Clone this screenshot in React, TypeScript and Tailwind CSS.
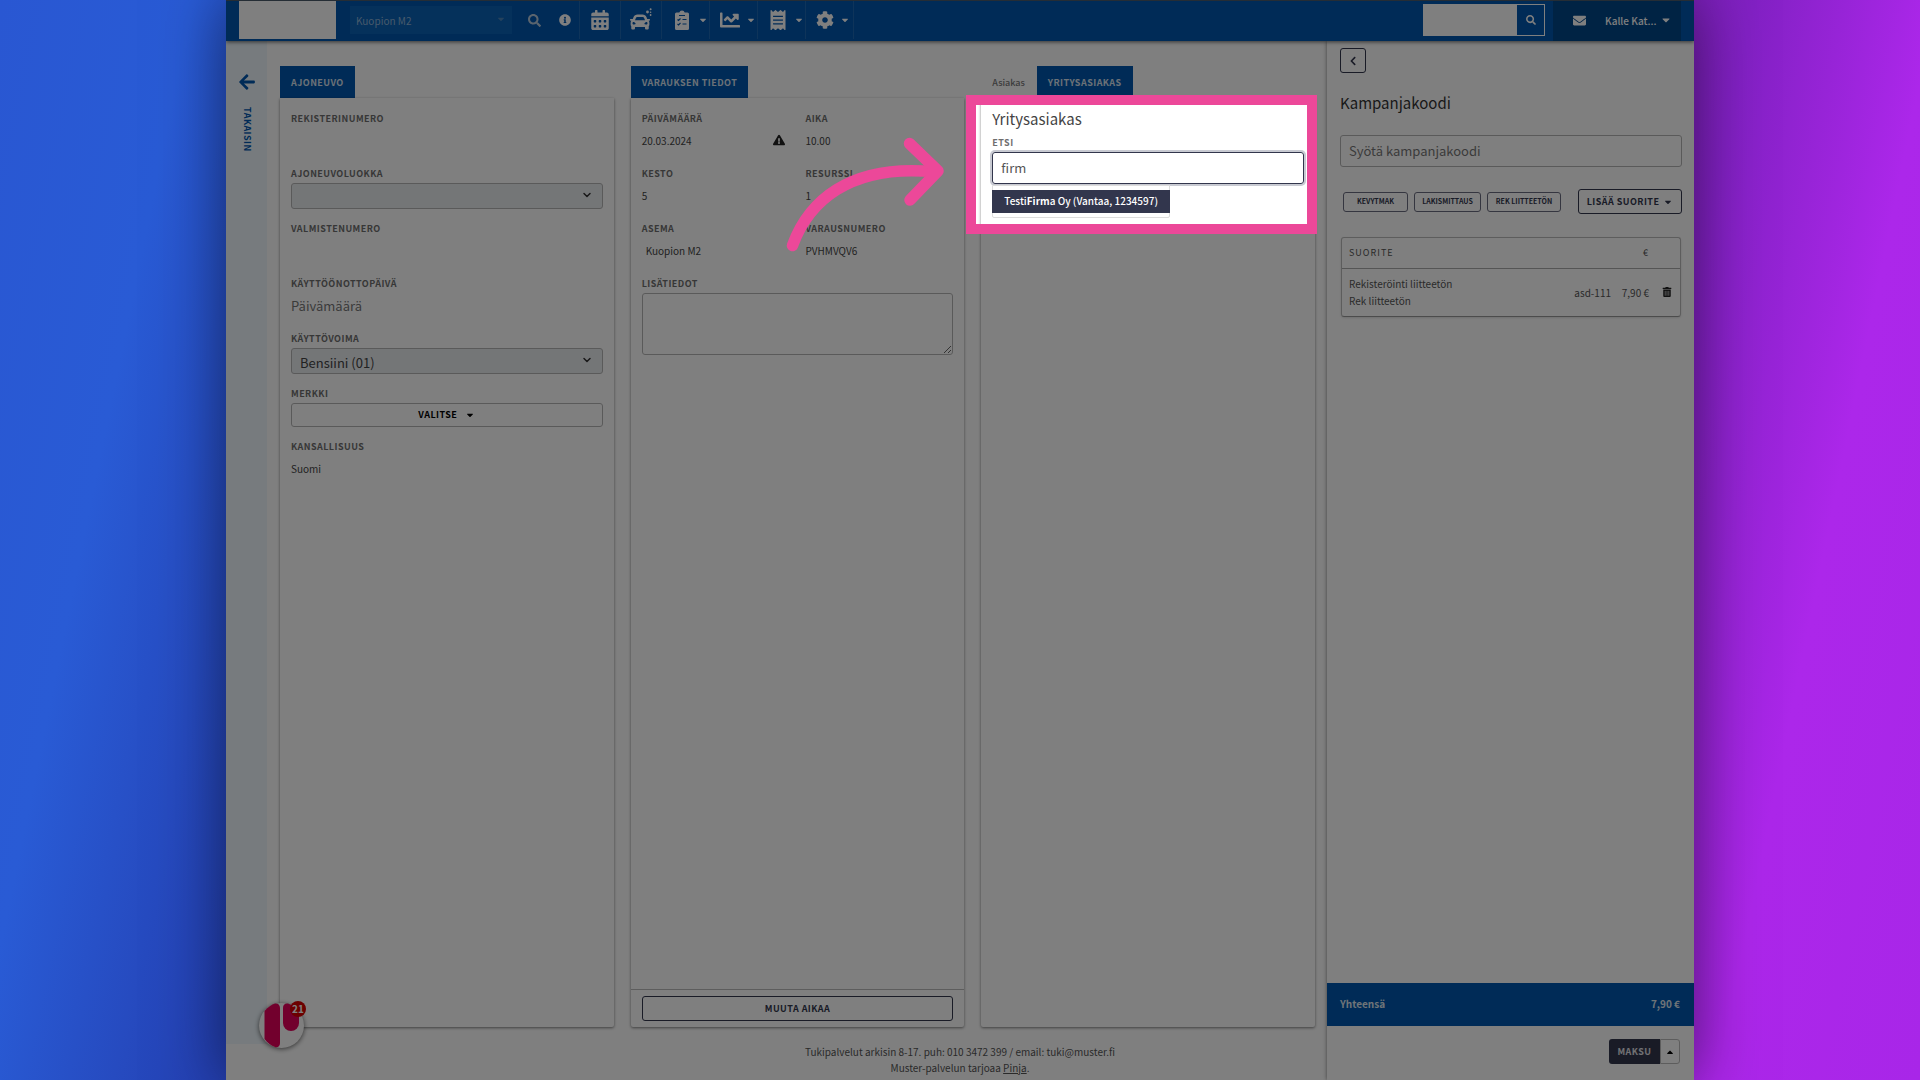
import type { ReactNode } from "react";
import clsx from "clsx";
import {
  FaArrowLeft,
  FaCalendarAlt,
  FaCar,
  FaCaretDown,
  FaCaretUp,
  FaChartLine,
  FaChevronLeft,
  FaCog,
  FaEnvelope,
  FaExclamationTriangle,
  FaInfoCircle,
  FaReceipt,
  FaSearch,
  FaTrashAlt,
} from "react-icons/fa";
import { LuChevronDown } from "react-icons/lu";

const labelStyle =
  "block h-3.5 text-[9px] leading-[14px] font-bold tracking-wider text-[#6e6e6e] uppercase";

const NavButton = ({
  label,
  caret = false,
  children,
}: {
  label: string;
  caret?: boolean;
  children: ReactNode;
}) => (
  <button
    aria-label={label}
    className={clsx(
      "flex h-full items-center border-l border-[#1d69b5] text-white",
      caret ? "w-12 gap-1.5 pl-2.5" : "w-[41px] justify-center",
    )}
  >
    {children}
    {caret && <FaCaretDown className="size-2.5 shrink-0" />}
  </button>
);

const CarWash = () => (
  <span className="flex">
    <FaCar className="mt-1 size-5" />
    <svg viewBox="0 0 6 8" className="-ml-1 h-2 w-1.5" fill="currentColor">
      <circle cx="1.5" cy="4" r="1.4" />
      <circle cx="4.6" cy="1.2" r="1" />
      <circle cx="4.6" cy="4.2" r="0.8" />
      <circle cx="4.6" cy="7" r="0.9" />
    </svg>
  </span>
);

const Checklist = () => (
  <svg viewBox="0 0 20 20" className="size-5 shrink-0">
    <path
      d="M4.500 2.500H7.300a2.800 2.800 0 0 1 5.400 0H15.500A1.500 1.500 0 0 1 17 4V18.500A1.500 1.500 0 0 1 15.500 20H4.500A1.500 1.500 0 0 1 3 18.500V4A1.500 1.500 0 0 1 4.500 2.500Z"
      fill="currentColor"
    />
    <path
      d="M7 5.500H13M5.500 9.500L6.500 10.500L8.500 8.500M10.500 9.500H14.500M5.500 14L6.500 15L8.500 13M10.500 14H14.500"
      fill="none"
      stroke="#0056ae"
      strokeWidth="1.1"
    />
  </svg>
);

const TopBar = () => (
  <header className="relative flex h-[41px] shrink-0 items-center border-t border-[#4a5a6a] bg-[#0056ae] pb-0.5 pl-[13px] shadow-[0_1px_4px_rgba(0,0,0,0.6)]">
    <div className="h-[38px] w-[97px] self-start bg-white" />
    <div className="relative ml-3.5">
      <select
        aria-label="Asema"
        className="block h-7 w-[162px] appearance-none bg-[#0a62b6] px-1.5 text-[10px] text-[#8fb4d8]"
      >
        <option>Kuopion M2</option>
      </select>
      <FaCaretDown className="pointer-events-none absolute top-2 right-1.5 size-2.5 text-[#4a84bb]" />
    </div>
    <button aria-label="Haku" className="ml-4 text-[#b4c9dd]">
      <FaSearch className="size-[13px]" />
    </button>
    <button aria-label="Tietoja" className="ml-[18px] text-white">
      <FaInfoCircle className="size-3" />
    </button>
    <nav className="ml-2 flex h-full border-r border-[#1d69b5]">
      <NavButton label="Kalenteri">
        <FaCalendarAlt className="size-5" />
      </NavButton>
      <NavButton label="Ajoneuvot">
        <CarWash />
      </NavButton>
      <NavButton label="Tehtävät" caret>
        <Checklist />
      </NavButton>
      <NavButton label="Raportit" caret>
        <FaChartLine className="size-5 shrink-0" />
      </NavButton>
      <NavButton label="Kuitit" caret>
        <FaReceipt className="size-5 shrink-0" />
      </NavButton>
      <NavButton label="Asetukset" caret>
        <FaCog className="size-[18px] shrink-0" />
      </NavButton>
    </nav>
    <div className="ml-auto flex h-8 border border-white">
      <input aria-label="Etsi ajoneuvo" className="w-[93px] bg-white px-2 text-xs" />
      <button aria-label="Etsi" className="flex w-[27px] items-center justify-center text-white">
        <FaSearch className="size-2.5" />
      </button>
    </div>
    <div className="-mb-0.5 mr-[13px] ml-2 flex w-32 items-center self-stretch bg-[#004689] pb-0.5 pl-5 text-white">
      <FaEnvelope className="size-[13px]" />
      <button className="ml-[19px] flex items-center gap-1 text-[10px] font-medium">
        Kalle Kat... <FaCaretDown className="size-3" />
      </button>
    </div>
  </header>
);

const BackRail = () => (
  <a
    href="#takaisin"
    className="flex w-[41px] flex-col items-center gap-4 bg-[#eef7fd] pt-8 text-[#0056ae]"
  >
    <FaArrowLeft className="size-[18px]" />
    <span className="text-[9px] leading-3 font-bold tracking-wider [writing-mode:vertical-rl]">
      TAKAISIN
    </span>
  </a>
);

const Tab = ({ children }: { children: ReactNode }) => (
  <button className="h-8 bg-[#0056ae] px-[11px] pt-0.5 text-[9px] font-bold tracking-wider text-[#d9e3ee] uppercase">
    {children}
  </button>
);

const Column = ({ tabs, children }: { tabs: ReactNode; children: ReactNode }) => (
  <section className="relative flex flex-col">
    <div className="flex h-8 items-stretch">{tabs}</div>
    <div className="flex flex-1 flex-col rounded-b-xs bg-white shadow-[0_1px_3px_rgba(0,0,0,0.5)]">
      {children}
    </div>
  </section>
);

const Field = ({
  label,
  children,
  htmlFor,
}: {
  label: string;
  children?: ReactNode;
  htmlFor?: string;
}) => (
  <div className="flex flex-col gap-0.5">
    <label htmlFor={htmlFor} className={labelStyle}>
      {label}
    </label>
    {children ?? <div className="h-[26px]" />}
  </div>
);

const Value = ({ children }: { children: ReactNode }) => (
  <p className="flex h-[26px] items-center pb-0.5 text-[10px] text-[#444]">{children}</p>
);

const SelectBox = ({ id, value }: { id: string; value: string }) => (
  <div className="relative">
    <select
      id={id}
      className="block h-[26px] w-full appearance-none rounded-[3px] border border-[#b5b5b5] bg-[#e9ecef] px-2 pt-0.5 text-[13px] leading-6 text-[#444]"
    >
      <option>{value}</option>
    </select>
    <LuChevronDown
      strokeWidth={3}
      className="pointer-events-none absolute top-1.5 right-2.5 size-3 text-[#333]"
    />
  </div>
);

const VehicleColumn = () => (
  <Column tabs={<Tab>Ajoneuvo</Tab>}>
    <div className="flex flex-col gap-[13px] px-[11px] pt-3.5">
      <Field label="Rekisterinumero" />
      <Field label="Ajoneuvoluokka" htmlFor="luokka">
        <SelectBox id="luokka" value="" />
      </Field>
      <Field label="Valmistenumero" />
      <Field label="Käyttöönottopäivä" htmlFor="kayttoonotto">
        <input
          id="kayttoonotto"
          placeholder="Päivämäärä"
          className="h-[26px] pb-0.5 text-[13px] placeholder:text-[#777]"
        />
      </Field>
      <Field label="Käyttövoima" htmlFor="kayttovoima">
        <SelectBox id="kayttovoima" value="Bensiini (01)" />
      </Field>
      <Field label="Merkki" htmlFor="merkki">
        <button
          id="merkki"
          className="flex h-6 items-center justify-center gap-2 rounded-[3px] border border-[#b5b5b5] text-[9px] font-bold tracking-wider text-black"
        >
          VALITSE <FaCaretDown className="size-2.5" />
        </button>
      </Field>
      <Field label="Kansallisuus">
        <Value>Suomi</Value>
      </Field>
    </div>
  </Column>
);

const BookingColumn = () => (
  <Column tabs={<Tab>Varauksen tiedot</Tab>}>
    <div className="grid grid-cols-2 gap-x-4 gap-y-[13px] px-[11px] pt-3.5">
      <Field label="Päivämäärä">
        <div className="flex items-center justify-between pr-1">
          <Value>20.03.2024</Value>
          <FaExclamationTriangle className="mb-0.5 size-3 text-[#222]" />
        </div>
      </Field>
      <Field label="Aika">
        <Value>10.00</Value>
      </Field>
      <Field label="Kesto">
        <Value>5</Value>
      </Field>
      <Field label="Resurssi">
        <Value>1</Value>
      </Field>
      <Field label="Asema">
        <div className="pl-1">
          <Value>Kuopion M2</Value>
        </div>
      </Field>
      <Field label="Varausnumero">
        <Value>PVHMVQV6</Value>
      </Field>
      <div className="col-span-2">
        <Field label="Lisätiedot" htmlFor="lisatiedot">
          <textarea
            id="lisatiedot"
            className="block h-[62px] w-full rounded-[3px] border border-[#b5b5b5] bg-white"
          />
        </Field>
      </div>
    </div>
    <div className="mt-auto border-t border-[#bbb] px-[11px] py-1.5">
      <button className="block h-[25px] w-full rounded-[3px] border border-[#32364d] text-[9px] font-bold tracking-wider text-[#32364d]">
        MUUTA AIKAA
      </button>
    </div>
  </Column>
);

// Dims everything outside the pink frame
const Spotlight = () => (
  <div className="pointer-events-none absolute top-[29px] -right-0.5 -left-[15px] z-40 h-[139px]">
    <div className="h-full border-10 border-[#ec4899] shadow-[0_0_0_9999px_rgba(0,0,0,0.5)]" />
    <svg
      viewBox="782 130 170 130"
      className="absolute top-[35px] -left-[184px] h-[130px] w-[170px]"
      fill="none"
      stroke="#ec4899"
      strokeWidth="11.5"
      strokeLinecap="round"
      strokeLinejoin="round"
    >
      <path d="M792.5 245.5C808 203 848 163 936 172" />
      <path d="M909.5 143.500L938 171L910 200" />
    </svg>
  </div>
);

const CompanyColumn = () => (
  <Column
    tabs={
      <>
        <button className="mr-3 ml-[11px] pt-0.5 text-[9px] font-medium text-[#777]">
          Asiakas
        </button>
        <Tab>Yritysasiakas</Tab>
      </>
    }
  >
    <div className="px-[11px] pt-2.5">
      <h2 className="mb-1.5 text-[15px] leading-[22px] text-[#444]">Yritysasiakas</h2>
      <label htmlFor="etsi" className={labelStyle}>
        Etsi
      </label>
      <div className="relative mt-0.5">
        <input
          id="etsi"
          defaultValue="firm"
          className="block h-8 w-full rounded-[3px] border border-[#32364d] px-2 pb-0.5 text-[13px] text-[#555] shadow-[0_0_0_2px_#c8cad2]"
        />
        <ul className="absolute top-full left-0 mt-px rounded-b-xs border border-[#ddd] bg-white py-1">
          <li className="-mx-px bg-[#32364d] px-3 pb-0.5 text-[10px] leading-[21px] font-medium whitespace-nowrap text-white">
            Testi<b>Firm</b>a Oy (Vantaa, 1234597)
          </li>
        </ul>
      </div>
    </div>
    <Spotlight />
  </Column>
);

const QuickButton = ({ children }: { children: ReactNode }) => (
  <button className="h-5 rounded-[3px] border border-[#6b6d80] text-[7px] font-bold whitespace-nowrap text-[#32364d]">
    {children}
  </button>
);

const Sidebar = () => (
  <aside className="flex w-[367px] shrink-0 flex-col bg-white shadow-[0_0_4px_rgba(0,0,0,0.5)]">
    <div className="flex flex-1 flex-col pr-3 pl-[13px]">
      <button
        aria-label="Takaisin"
        className="mt-[7px] flex h-[25px] w-[26px] items-center justify-center rounded-[3px] border border-[#32364d] text-[#32364d]"
      >
        <FaChevronLeft className="size-2.5" />
      </button>
      <label htmlFor="koodi" className="mt-4 text-[15px] leading-7 text-[#333]">
        Kampanjakoodi
      </label>
      <input
        id="koodi"
        placeholder="Syötä kampanjakoodi"
        className="mt-[18px] h-8 rounded-[3px] border border-[#b5b5b5] px-2 pb-0.5 text-[13px] placeholder:text-[#777]"
      />
      <div className="mt-[22px] flex items-center justify-between">
        <div className="grid w-[221px] grid-cols-[65fr_67fr_74fr] gap-1.5 pl-[3px]">
          <QuickButton>KEVYTMAK</QuickButton>
          <QuickButton>LAKISMITTAUS</QuickButton>
          <QuickButton>REK LIITTEETÖN</QuickButton>
        </div>
        <button className="flex h-[25px] w-[104px] items-center justify-center gap-1 rounded-[3px] border border-[#32364d] text-[9px] font-bold tracking-wider whitespace-nowrap text-[#32364d]">
          LISÄÄ SUORITE <FaCaretDown className="size-2.5" />
        </button>
      </div>
      <div className="mx-px mt-[23px] rounded-[3px] border border-[#bbb] border-b-[#999] shadow-sm">
        <table className="w-full text-[10px] text-[#555]">
          <thead>
            <tr className="h-[30px] border-b border-[#aaa]">
              <th className="pl-[7px] text-left text-[9px] font-normal tracking-[1px]" colSpan={2}>
                SUORITE
              </th>
              <th className="pr-2 text-right text-[9px] font-normal">€</th>
              <th className="w-6" />
            </tr>
          </thead>
          <tbody>
            <tr className="h-12">
              <td className="pl-[7px] leading-[17px]">
                Rekisteröinti liitteetön
                <br />
                Rek liitteetön
              </td>
              <td className="text-right">asd-111</td>
              <td className="w-[45px] pr-[7px] text-right whitespace-nowrap">7,90 €</td>
              <td className="w-6">
                <button aria-label="Poista" className="block pl-1.5 text-[#222]">
                  <FaTrashAlt className="size-2.5" />
                </button>
              </td>
            </tr>
          </tbody>
        </table>
      </div>
    </div>
    <div className="flex h-[43px] items-center justify-between bg-[#0056ae] pr-3.5 pb-0.5 pl-[13px] text-[10px] font-bold text-[#dfe8f1]">
      <span>Yhteensä</span>
      <span>7,90 €</span>
    </div>
    <div className="flex h-[54px] justify-end pt-[13px] pr-3.5">
      <button className="h-[25px] w-[51px] rounded-l-[3px] bg-[#32364d] text-[9px] font-bold tracking-wider text-[#e4e4e8]">
        MAKSU
      </button>
      <button
        aria-label="Lisää maksutapoja"
        className="flex h-[25px] w-5 items-center justify-center rounded-r-[3px] border border-[#bbb]"
      >
        <FaCaretUp className="size-2.5" />
      </button>
    </div>
  </aside>
);

const ChatBubble = () => (
  <button
    aria-label="Viestit"
    className="absolute bottom-8 left-[33px] size-[45px] rounded-full bg-white shadow-[0_1px_5px_rgba(0,0,0,0.6)]"
  >
    <svg viewBox="0 0 45 45" className="size-full" fill="#e5005b">
      <path d="M5.500 8C9 4 12.500 1.500 16 .500C19 0 21 2 21 5V40C21 43 19 45 16 44C12 42.500 8.500 40 5.500 36Z" />
      <path d="M24 5C24 1.500 26 0 29 .500C33 2 37 4.500 40 8V20A8 8 0 0 1 24 20Z" />
    </svg>
    <span className="absolute -top-0.5 -right-0.5 flex size-4 items-center justify-center rounded-full bg-[#d80000] text-[10px] leading-none font-bold text-white">
      21
    </span>
  </button>
);

export default function App() {
  return (
    <div className="flex min-h-screen bg-[linear-gradient(101.5deg,#2957d2_0%,#295bd5_9%,#2440b2_20%,#20288e_35%,#5c188e_68%,#8221c4_82%,#ac27ea_90.5%,#a826e8_100%)] px-[226px] font-['Noto_Sans_CJK_SC',sans-serif]">
      <div className="flex flex-1 shadow-[0_0_60px_rgba(0,0,0,0.5)]">
        <div className="relative flex flex-1 flex-col overflow-hidden bg-white">
          <TopBar />
          <div className="flex flex-1">
            <div className="flex flex-1 flex-col">
              <div className="flex flex-1">
                <BackRail />
                <main className="mb-[17px] grid flex-1 grid-cols-3 gap-[17px] pt-[25px] pr-3 pl-[13px]">
                  <VehicleColumn />
                  <BookingColumn />
                  <CompanyColumn />
                </main>
              </div>
              <footer className="h-9 pl-[367px] text-center text-[10px] leading-4 text-[#555]">
                <p>Tukipalvelut arkisin 8-17. puh: 010 3472 399 / email: tuki@muster.fi</p>
                <p>
                  Muster-palvelun tarjoaa{" "}
                  <a href="#pinja" className="underline">
                    Pinja
                  </a>
                  .
                </p>
              </footer>
            </div>
            <Sidebar />
          </div>
          <ChatBubble />
        </div>
      </div>
    </div>
  );
}
